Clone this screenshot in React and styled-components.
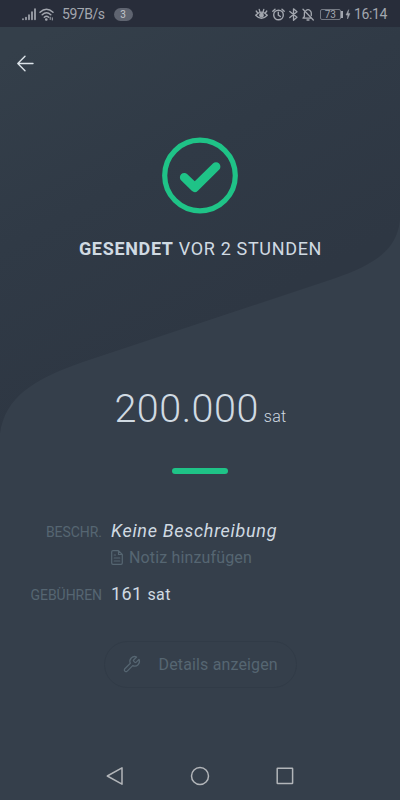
import React from "react";
import styled, { createGlobalStyle } from "styled-components";

const GlobalStyle = createGlobalStyle`
  * { box-sizing: border-box; }
  body { margin: 0; background: #353f4b; }
`;

const Screen = styled.div`
  position: relative;
  isolation: isolate;
  display: flex;
  flex-direction: column;
  width: 400px;
  height: 800px;
  overflow: hidden;
  background: #353f4b;
  color: #d0dae2;
  font-family: Roboto, "Liberation Sans", sans-serif;
`;

const Backdrop = styled.svg`
  position: absolute;
  inset: 0;
  z-index: -1;
`;

const StatusBar = styled.header`
  display: flex;
  flex: none;
  align-items: center;
  justify-content: space-between;
  height: 27px;
  padding: 1px 13px 0 22px;
  background: #282d3a;
  color: #a3a7af;
`;

const StatusGroup = styled.div`
  display: flex;
  align-items: center;
  gap: ${(p) => p.$gap}px;
`;

const StatusText = styled.span`
  font-size: 14px;
  line-height: 18px;
  letter-spacing: ${(p) => p.$spacing || 0}px;
  margin-left: ${(p) => p.$before || 0}px;
`;

const CountBadge = styled.span`
  width: 19px;
  height: 13px;
  margin-left: 6px;
  border-radius: 7px;
  background: #5f6470;
  color: #c3c6cb;
  font-size: 10px;
  line-height: 13px;
  text-align: center;
`;

const Battery = styled.span`
  position: relative;
  width: 21px;
  height: 11px;
  margin-left: 2px;
  margin-right: 1px;
  border: 1px solid #747983;
  border-radius: 2px;
  font-size: 10px;
  line-height: 9px;
  text-align: center;
  &::after {
    content: "";
    position: absolute;
    right: -3px;
    top: 1px;
    width: 2px;
    height: 7px;
    background: #a3a7af;
  }
`;

const Icon = styled.svg`
  display: block;
  flex: none;
  fill: none;
  stroke: currentColor;
  stroke-linecap: round;
  stroke-linejoin: round;
  overflow: visible;
`;

const TopBar = styled.nav`
  display: flex;
  flex: none;
  align-items: center;
  height: 73px;
  padding-left: 16px;
`;

const BackButton = styled.button`
  padding: 0;
  border: 0;
  background: none;
  color: #dce3e9;
`;

const Content = styled.main`
  display: flex;
  flex: 1;
  flex-direction: column;
  align-items: center;
  padding-top: 37px;
`;

const Title = styled.h1`
  margin: 23px 0 0;
  padding-left: 1px;
  font-size: 18px;
  font-weight: 400;
  line-height: 24px;
  letter-spacing: 0.66px;
  white-space: nowrap;
  strong { font-weight: 700; }
`;

const Amount = styled.div`
  display: flex;
  align-items: baseline;
  gap: 5px;
  margin-top: 124px;
  padding: 0 0 1px 1px;
  white-space: nowrap;
`;

const AmountValue = styled.span`
  font-size: 39.5px;
  font-weight: 300;
  line-height: 48px;
  letter-spacing: 0.5px;
`;

const AmountUnit = styled.span`
  font-size: 16px;
  font-weight: 300;
  letter-spacing: 0.3px;
`;

const Divider = styled.div`
  width: 56px;
  height: 6px;
  margin-top: 34px;
  border-radius: 3px;
  background: #1fc387;
`;

const Details = styled.dl`
  display: grid;
  grid-template-columns: 102px 1fr;
  column-gap: 9px;
  align-items: baseline;
  align-self: stretch;
  margin: 45px 0 0;
  white-space: nowrap;
`;

const Label = styled.dt`
  color: #566672;
  font-size: 14px;
  line-height: 24px;
  letter-spacing: -0.05px;
  text-align: right;
`;

const Value = styled.dd`
  margin: 0;
  font-size: 18px;
  font-style: ${(p) => (p.$italic ? "italic" : "normal")};
  line-height: 24px;
  letter-spacing: ${(p) => (p.$italic ? 0.7 : 0.4)}px;
  small { font-size: 16px; }
`;

const NoteButton = styled.button`
  grid-column: 2;
  display: flex;
  align-items: center;
  gap: 6px;
  margin-bottom: 12px;
  padding: 2px 0 0;
  border: 0;
  background: none;
  color: #566672;
  font: 400 16px/24px Roboto, sans-serif;
  letter-spacing: 0.15px;
  svg { margin-bottom: 2px; }
`;

const DetailsButton = styled.button`
  display: flex;
  align-items: center;
  width: 193px;
  height: 47px;
  margin-top: 34px;
  padding: 0 0 0 17px;
  gap: 18px;
  border: 1px solid #313b47;
  border-radius: 24px;
  background: none;
  color: #566672;
  font: 400 16px/24px Roboto, sans-serif;
  letter-spacing: 0.15px;
  white-space: nowrap;
`;

const SystemNav = styled.footer`
  display: flex;
  flex: none;
  align-items: center;
  justify-content: center;
  gap: 66px;
  height: 48px;
  color: #b2b5b9;
`;

export default function App() {
  return (
    <>
      <GlobalStyle />
      <Screen>
        <Backdrop width="400" height="800" viewBox="0 0 400 800">
          <defs>
            <linearGradient id="shade" gradientUnits="userSpaceOnUse" x1="70" y1="20" x2="230" y2="320">
              <stop offset="0" stopColor="#343f4a" />
              <stop offset="0.5" stopColor="#303a46" />
              <stop offset="1" stopColor="#2e3743" />
            </linearGradient>
          </defs>
          <path d="M0 0H400V220C397 249 377 264 333 279L83 362C34 379 5 397 0 434Z" fill="url(#shade)" />
        </Backdrop>

        <StatusBar>
          <StatusGroup $gap={3}>
            <Icon width="14" height="13" viewBox="0 0 14 13" strokeWidth="1.7">
              <path d="M1 11.3V11M4 11.3V9.5M7 11.3V7M10 11.3V4M13 11.3V1" />
            </Icon>
            <Icon width="15" height="13" viewBox="0 0 15 13" strokeWidth="1.5">
              <path d="M1 4.2Q7.5-1.8 14 4.2M3.2 6.8Q7.5 2.8 11.8 6.8M5.3 9.2Q7.5 7.2 9.7 9.2" />
              <circle cx="7.3" cy="11.5" r=".6" fill="currentColor" />
              <path d="M11.2 9.2V11.5M13.3 9.8V12" strokeWidth="1" />
            </Icon>
            <StatusText $spacing={-0.45} $before={5}>597B/s</StatusText>
            <CountBadge>3</CountBadge>
          </StatusGroup>
          <StatusGroup $gap={4}>
            <Icon width="13" height="13" viewBox="0 0 13 13" strokeWidth="1.3">
              <path d="M.7 7.2Q6.5 1 12.3 7.2Q6.5 13.3.7 7.2ZM1.2 3 2.7 5M4.2 1.3 4.8 3.5M8.8 1.3 8.2 3.5M11.8 3 10.3 5" />
              <circle cx="6.5" cy="7.2" r="1.7" fill="currentColor" />
            </Icon>
            <Icon width="13" height="13" viewBox="0 0 13 13" strokeWidth="1.4">
              <circle cx="6.5" cy="7" r="4.8" />
              <path d="M6.3 4.3V7.2L8.3 8.5M.8 3.2 3 1.2M12.2 3.2 10 1.2" />
            </Icon>
            <Icon width="9" height="13" viewBox="0 0 9 13" strokeWidth="1.3">
              <path d="M.8 3.5 8 9.2 4.5 12.3V.8L8 3.8.8 9.5" />
            </Icon>
            <Icon width="12" height="13" viewBox="0 0 12 13" strokeWidth="1.3">
              <path d="M1 1.2 11.3 12M2.4 4.5V8.5L1 10.2H8.5M4 2.4Q6 .9 8 2.4 9.3 3.4 9.3 5V7.5M5 12H7" />
            </Icon>
            <Battery>73</Battery>
            <Icon width="4" height="9" viewBox="0 0 4 9" strokeWidth=".5">
              <path d="M2.5 0 0 5H1.8L1.5 9 4 3.6H2.2Z" fill="currentColor" />
            </Icon>
            <StatusText $spacing={-0.35}>16:14</StatusText>
          </StatusGroup>
        </StatusBar>

        <TopBar>
          <BackButton aria-label="Zurück">
            <Icon width="18" height="16" viewBox="0 0 18 16" strokeWidth="1.4">
              <path d="M17 7.5H2M9 .3 1.8 7.5 9 14.7" />
            </Icon>
          </BackButton>
        </TopBar>

        <Content>
          <Icon width="78" height="77" viewBox="0 0 78 77" color="#1fc387">
            <circle cx="39" cy="38.5" r="35.3" strokeWidth="5.2" />
            <path d="M23.3 40.4 33.8 50.5 55 29.6" strokeWidth="8.8" />
          </Icon>
          <Title><strong>GESENDET</strong> VOR 2 STUNDEN</Title>
          <Amount>
            <AmountValue>200.000</AmountValue>
            <AmountUnit>sat</AmountUnit>
          </Amount>
          <Divider />
          <Details>
            <Label>BESCHR.</Label>
            <Value $italic>Keine Beschreibung</Value>
            <NoteButton>
              <Icon width="12" height="15" viewBox="0 0 12 15" strokeWidth="1.2">
                <path d="M7.5.7H2Q.7.7.7 2V13Q.7 14.3 2 14.3H10Q11.3 14.3 11.3 13V4.5ZM7.5.7V4.5H11.3M3.2 5H4.5M3.2 8H8.8M3.2 11H8.8" />
              </Icon>
              Notiz hinzufügen
            </NoteButton>
            <Label>GEBÜHREN</Label>
            <Value>161 <small>sat</small></Value>
          </Details>
          <DetailsButton>
            <Icon width="19" height="19" viewBox="0 0 24 24" strokeWidth="1.6">
              <path d="M14.7 6.3a1 1 0 0 0 0 1.4l1.6 1.6a1 1 0 0 0 1.4 0l3.77-3.77a6 6 0 0 1-7.94 7.94l-6.91 6.91a2.12 2.12 0 0 1-3-3l6.91-6.91a6 6 0 0 1 7.94-7.94l-3.76 3.76z" />
            </Icon>
            Details anzeigen
          </DetailsButton>
        </Content>

        <SystemNav>
          <Icon width="18" height="20" viewBox="0 0 18 20" strokeWidth="1.5">
            <path d="M16 1.8V18.2L1.3 10Z" />
          </Icon>
          <Icon width="20" height="20" viewBox="0 0 20 20" strokeWidth="1.5">
            <circle cx="10" cy="10" r="8.5" />
          </Icon>
          <Icon width="18" height="18" viewBox="0 0 18 18" strokeWidth="1.5">
            <rect x="1.2" y="1.2" width="15.4" height="15.4" rx=".5" />
          </Icon>
        </SystemNav>
      </Screen>
    </>
  );
}
